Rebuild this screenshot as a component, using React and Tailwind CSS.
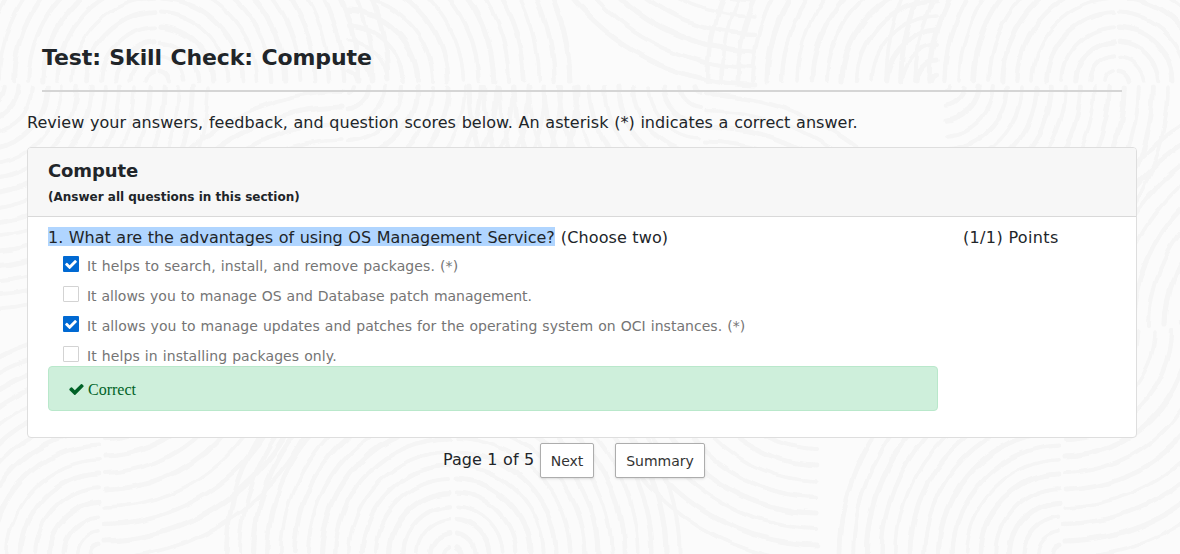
import React from "react";

// Arc groups of one 960px wide background tile: centre, quadrant, first radius, last radius, step.
const GROUPS = [
  [157, 83, "tl", 12, 240, 14.6],
  [157, 83, "tr", 12, 232, 14.6],
  [345, 83, "tr", 12, 228, 15.2],
  [757, -154, "bl", 120, 240, 17],
  [940, 83, "tl", 8, 238, 15],
  [-17, 85, "br", 6, 234, 14.6],
  [345, 327, "tl", 12, 236, 16],
  [345, 85, "br", 8, 236, 16],
  [702, 85, "bl", 8, 236, 15],
  [702, 350, "tr", 100, 260, 15.5],
  [102, 329, "br", 8, 236, 17],
  [102, 555, "tl", 10, 234, 14.2],
  [452, 555, "tl", 8, 236, 13.6],
  [454, 555, "tr", 8, 234, 13.6],
  [820, 329, "bl", 8, 236, 16],
];

function arcPath(cx, cy, q, r) {
  const sx = q[1] === "l" ? -1 : 1;
  const sy = q[0] === "t" ? -1 : 1;
  const sweep = sx * sy > 0 ? 1 : 0;
  return `M${cx + sx * r} ${cy + sy * 2} A${r} ${r} 0 0 ${sweep} ${cx + sx * 3} ${cy + sy * r}`;
}

function Tile() {
  return GROUPS.map(([cx, cy, q, start, end, step], g) => {
    const arcs = [];
    for (let r = start, i = 0; r <= end; r += step, i++) {
      arcs.push(
        <path key={i} d={arcPath(cx, cy, q, r)} strokeWidth={3.6 + ((i * 7 + g * 3) % 5) * 0.4} />
      );
    }
    return <g key={g}>{arcs}</g>;
  });
}

function Backdrop() {
  return (
    <svg className="absolute inset-0 h-full w-full" viewBox="0 0 1180 554" aria-hidden="true">
      <defs>
        <filter id="wobble" x="0" y="0" width="1180" height="554" filterUnits="userSpaceOnUse">
          <feTurbulence type="fractalNoise" baseFrequency="0.035" numOctaves="2" seed="4" />
          <feDisplacementMap in="SourceGraphic" scale="6" xChannelSelector="R" yChannelSelector="G" />
        </filter>
      </defs>
      <g filter="url(#wobble)" fill="none" stroke="#f5f5f5" strokeLinecap="round">
        <Tile />
        <g transform="translate(960 0)">
          <Tile />
        </g>
      </g>
    </svg>
  );
}

function CheckMark({ className }) {
  return (
    <svg className={className} viewBox="0 0 1550 1188" fill="currentColor" aria-hidden="true">
      <path d="M1550 232q0 40-28 68l-724 724-136 136q-28 28-68 28t-68-28l-136-136L28 662Q0 634 0 594t28-68l136-136q28-28 68-28t68 28l294 295 656-657q28-28 68-28t68 28l136 136q28 28 28 68z" />
    </svg>
  );
}

const ANSWERS = [
  { text: "It helps to search, install, and remove packages. (*)", checked: true, track: "tracking-[0.09px]" },
  { text: "It allows you to manage OS and Database patch management.", checked: false, track: "tracking-[-0.01px]" },
  { text: "It allows you to manage updates and patches for the operating system on OCI instances. (*)", checked: true, track: "tracking-[0.04px]" },
  { text: "It helps in installing packages only.", checked: false, track: "tracking-[0.08px]" },
];

function Answer({ text, checked, track }) {
  return (
    <li className="flex h-[30px] items-start">
      <span
        className={
          checked
            ? "flex size-4 shrink-0 items-center justify-center rounded-[1px] bg-[#0069d2] text-white"
            : "size-4 shrink-0 rounded-[1px] border border-[#d3d3d3] bg-white"
        }
      >
        {checked && <CheckMark className="h-[9px] w-[12px]" />}
      </span>
      <span className={`ml-[8px] whitespace-nowrap text-[14px] leading-[20px] text-[#757575] [word-spacing:0.5px] ${track}`}>{text}</span>
    </li>
  );
}

export default function App() {
  return (
    <div className="relative h-[554px] w-[1180px] overflow-hidden bg-[#fbfbfb] font-['Verdana','DejaVu_Sans',sans-serif] text-[16px] text-[#212529]">
      <Backdrop />
      <main className="relative px-[27px] pr-[43px]">
        <header className="ml-[15px] mr-[15px] h-[92px] border-b-2 border-[#d5d5d5] pt-[42px]">
          <h1 className="whitespace-nowrap text-[22px] font-bold leading-[32px] tracking-[-0.1px] [word-spacing:0.9px]">Test: Skill Check: Compute</h1>
        </header>
        <p className="h-[55px] whitespace-nowrap pt-[19px] leading-6 tracking-[0.035px] [word-spacing:0.55px]">
          Review your answers, feedback, and question scores below. An asterisk (*) indicates a correct answer.
        </p>
        <section className="h-[291px] overflow-hidden rounded-[4px] border border-[#dedede] bg-white">
          <div className="h-[69px] border-b border-[#d9d9d9] bg-[#f7f7f7] px-5 pt-[11px]">
            <h2 className="whitespace-nowrap text-[18px] font-bold leading-[24px] tracking-[-0.12px]">Compute</h2>
            <p className="mt-[4px] whitespace-nowrap text-[12px] font-bold leading-[20px]">(Answer all questions in this section)</p>
          </div>
          <div className="flex px-5 pt-[8px]">
            <div className="w-[915px]">
              <p className="flex h-6 items-start whitespace-nowrap pt-[2px] leading-[21px]">
                <span className="h-[19px] bg-[#b0d5ff] tracking-[-0.025px] [word-spacing:0.54px]">1. What are the advantages of using OS Management Service?</span>
                <span className="ml-[6px] tracking-[0.13px]">(Choose two)</span>
              </p>
              <ul className="mt-[7px] h-[110px] pl-[15px]">
                {ANSWERS.map((a) => (
                  <Answer key={a.text} {...a} />
                ))}
              </ul>
              <div className="flex h-[45px] w-[890px] items-center rounded-[4px] border border-[#b9e8cb] bg-[#ceefdb] pl-5 font-['Liberation_Serif',serif] text-[16px] text-[#006227]">
                <CheckMark className="mt-[2px] h-[11px] w-[15px]" />
                <span className="ml-[4px] mt-[2px] leading-6">Correct</span>
              </div>
            </div>
            <p className="whitespace-nowrap pt-px leading-6 tracking-[0.35px]">(1/1) Points</p>
          </div>
        </section>
        <nav className="flex pl-[416px] pt-[5px]">
          <span className="mt-[5px] w-[97px] whitespace-nowrap leading-6 [word-spacing:0.5px]">Page 1 of 5</span>
          <button className="h-[35px] w-[54px] whitespace-nowrap rounded-[2px] border border-[#adadad] bg-white pt-[2px] text-[14px] text-[#333] shadow-sm">Next</button>
          <button className="ml-[21px] h-[35px] w-[90px] whitespace-nowrap rounded-[2px] border border-[#adadad] bg-white pt-[2px] text-[14px] text-[#333] shadow-sm">Summary</button>
        </nav>
      </main>
    </div>
  );
}
